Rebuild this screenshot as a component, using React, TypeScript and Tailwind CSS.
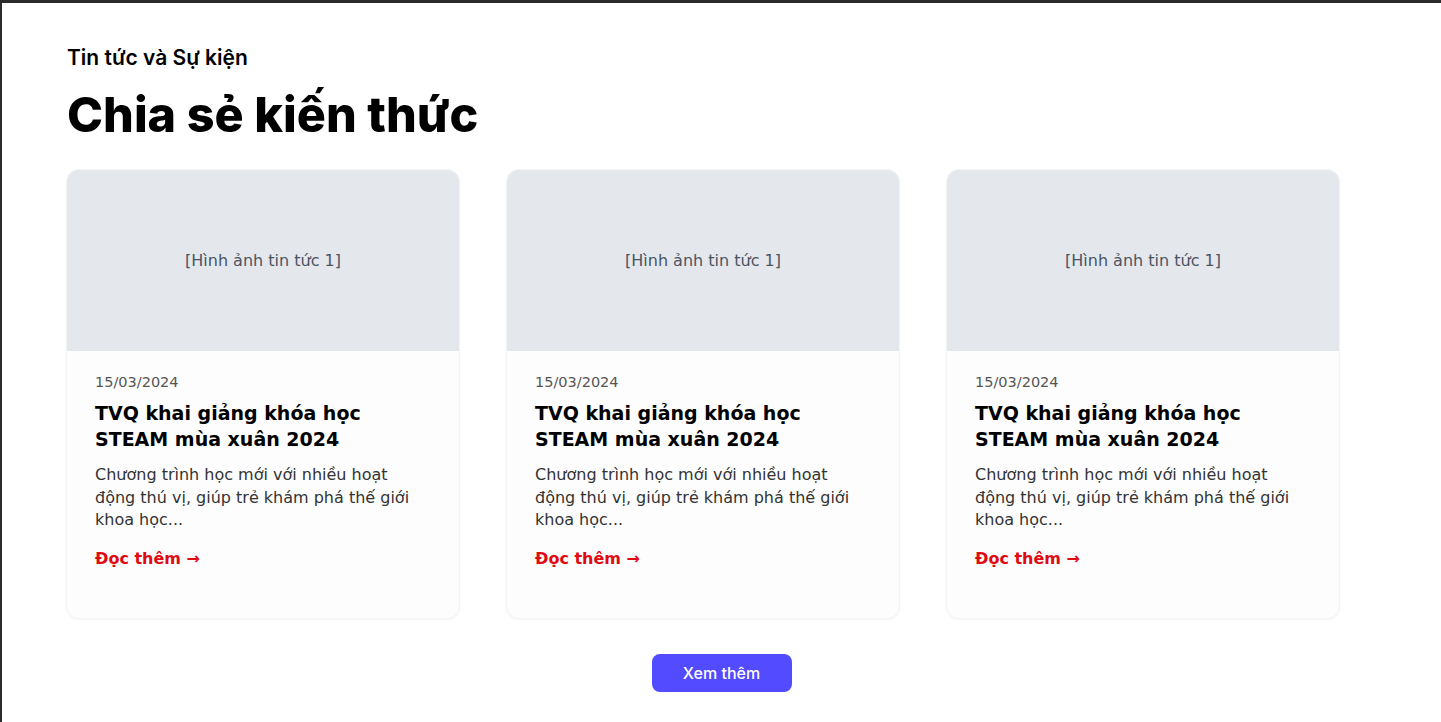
const posts = [1, 2, 3].map((i) => ({
  id: i,
  image: "[Hình ảnh tin tức 1]",
  date: "15/03/2024",
  title: "TVQ khai giảng khóa học STEAM mùa xuân 2024",
  excerpt: "Chương trình học mới với nhiều hoạt động thú vị, giúp trẻ khám phá thế giới khoa học...",
}));

export default function App() {
  return (
    <div className="min-h-screen bg-white border-t-[3px] border-l-2 border-[#2b2b2b] font-['Inter',sans-serif]">
      <section className="pt-[41px] pb-[30px]">
        <div className="pl-[65px]">
          <p className="text-[21px] font-semibold text-black leading-7">Tin tức và Sự kiện</p>
          <h2 className="mt-[15px] text-[48.5px] font-extrabold leading-[56px] text-black">
            Chia sẻ kiến thức
          </h2>
        </div>

        <div className="mt-[27px] pl-[65px] grid grid-cols-[repeat(3,392px)] gap-12 font-['DejaVu_Sans',sans-serif]">
          {posts.map((post) => (
            <article
              key={post.id}
              className="h-[448px] rounded-xl overflow-hidden bg-[#fdfdfd] shadow-[0_1px_3px_rgba(0,0,0,0.08)] ring-1 ring-[#f3f4f6]"
            >
              <div className="h-[181px] bg-[#e4e7ec] flex items-center justify-center text-[16px] text-[#4b5563]">
                {post.image}
              </div>
              <div className="px-7 pt-[21px]">
                <p className="text-[14.5px] leading-5 text-[#555]">{post.date}</p>
                <h3 className="mt-[8px] text-[19px] font-bold leading-[26px] text-black">
                  {post.title}
                </h3>
                <p className="mt-[12px] text-[16px] leading-[22.5px] text-[#333]">{post.excerpt}</p>
                <a href="#" className="mt-[15px] inline-block text-[16px] leading-6 font-bold text-[#e00a12]">
                  Đọc thêm →
                </a>
              </div>
            </article>
          ))}
        </div>

        <div className="mt-[36px] flex justify-center">
          <button className="w-[140px] h-[38px] rounded-lg bg-[#534bff] text-white text-[16px] font-medium">
            Xem thêm
          </button>
        </div>
      </section>
    </div>
  );
}
